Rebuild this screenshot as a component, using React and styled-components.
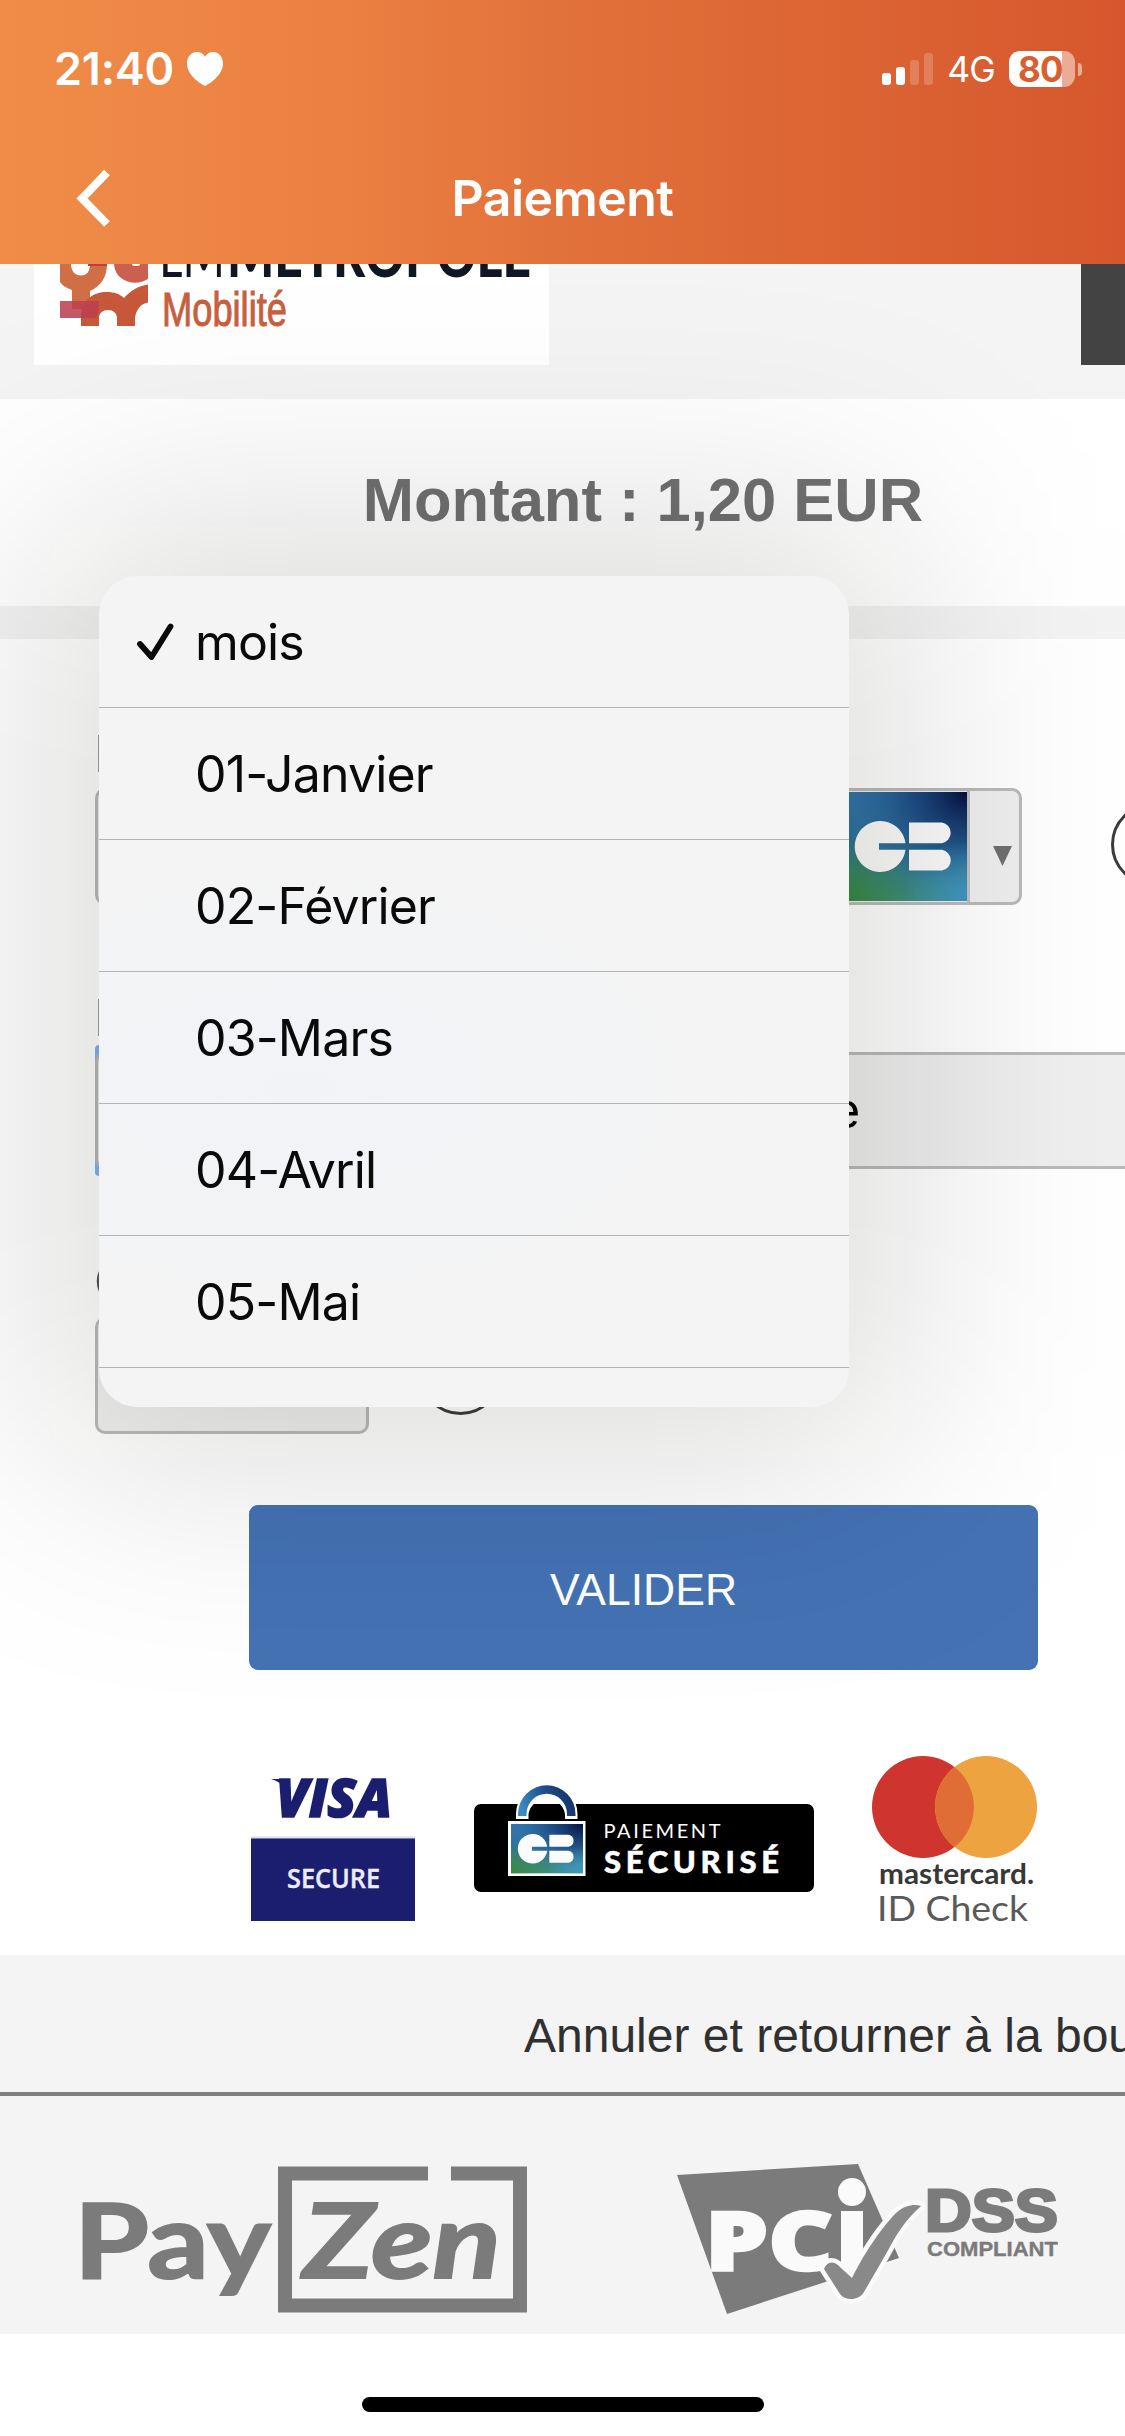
import React from 'react';
import styled, { createGlobalStyle } from 'styled-components';

const GlobalStyle = createGlobalStyle`
  *, *::before, *::after { box-sizing: border-box; }
  body { margin: 0; background: #fff; }
`;

const system = `Inter, 'Liberation Sans', sans-serif`;
const helvetica = `'Liberation Sans', Arial, sans-serif`;

const Screen = styled.div`
  position: relative;
  width: 1125px;
  height: 2436px;
  overflow: hidden;
  display: flex;
  flex-direction: column;
  background: #fff;
  font-family: ${helvetica};
`;

const Header = styled.header`
  flex: none;
  height: 264px;
  display: flex;
  flex-direction: column;
  color: #fff;
  font-family: ${system};
  background: linear-gradient(90deg, #f08c48 0%, #eb8042 30%, #e1703a 52%, #dc6433 75%, #d6572d 100%);
`;

const StatusBar = styled.div`
  height: 138px;
  padding: 0 43px 0 54px;
  display: flex;
  align-items: center;
  justify-content: space-between;
`;

const StatusGroup = styled.div`
  display: flex;
  align-items: center;
  gap: ${(p) => p.$gap}px;
`;

const Clock = styled.span`
  font-size: 45px;
  font-weight: 600;
  line-height: 54px;
  letter-spacing: -0.2px;
`;

const Network = styled.span`
  font-size: 35.5px;
  font-weight: 400;
  line-height: 42px;
  padding-top: 2px;
  letter-spacing: -0.8px;
`;

const Bars = styled.div`
  display: flex;
  align-items: flex-end;
  gap: 5px;
  height: 32px;
`;

const Bar = styled.span`
  width: 9px;
  height: ${(p) => p.$h}px;
  border-radius: 3px;
  background: #fff;
  opacity: ${(p) => (p.$on ? 1 : 0.2)};
`;

const Battery = styled.div`
  display: flex;
  align-items: center;
  gap: 3px;
`;

const BatteryBody = styled.div`
  width: 66px;
  height: 36px;
  padding-left: 9px;
  border-radius: 11px;
  display: flex;
  align-items: center;
  background: linear-gradient(90deg, #fff 53px, #eaac94 53px);
  color: #d95f31;
  font-size: 35px;
  font-weight: 700;
  line-height: 36px;
  letter-spacing: -0.8px;
`;

const BatteryCap = styled.span`
  width: 4px;
  height: 13px;
  border-radius: 0 5px 5px 0;
  background: #eaac94;
`;

const NavBar = styled.div`
  height: 120px;
  padding: 0 75px;
  display: grid;
  grid-template-columns: 40px 1fr 40px;
  align-items: center;
`;

const Title = styled.h1`
  margin: 0;
  text-align: center;
  font-size: 50px;
  font-weight: 600;
  line-height: 60px;
  letter-spacing: -0.5px;
`;

const Merchant = styled.div`
  flex: none;
  height: 135px;
  padding-left: 34px;
  display: flex;
  align-items: flex-start;
  justify-content: space-between;
  background: #f4f4f4;
`;

const MerchantLogo = styled.div`
  width: 515px;
  height: 101px;
  background: #fff;
`;

const LanguageBlock = styled.div`
  width: 44px;
  height: 101px;
  background: #434343;
`;

const Amount = styled.div`
  flex: none;
  height: 240px;
  padding: 65px 0 0 161px;
  border-bottom: 33px solid #f3f3f3;
  text-align: center;
  color: #717171;
  font-size: 61.5px;
  font-weight: 700;
  line-height: 72px;
`;

const Form = styled.main`
  flex: none;
  height: 1316px;
  padding: 87px 0 0 94px;
  display: flex;
  flex-direction: column;
`;

const FieldGroup = styled.div`
  flex: none;
  height: ${(p) => p.$h || 264}px;
  display: flex;
  flex-direction: column;
`;

const Label = styled.label`
  font-size: 54px;
  line-height: 54px;
  padding-bottom: ${(p) => p.$gap || 8}px;
  color: #555;
  white-space: nowrap;
`;

const FieldRow = styled.div`
  display: flex;
  align-items: center;
  flex: none;
  gap: ${(p) => p.$gap || 0}px;
`;

const Control = styled.div`
  flex: none;
  width: ${(p) => p.$w}px;
  height: 117px;
  margin-left: 1px;
  border: 3px solid #bababa;
  border-radius: 10px;
  display: flex;
  align-items: center;
  justify-content: flex-end;
  overflow: hidden;
  background: #efefef;
`;

const Arrow = styled.div`
  width: 52px;
  height: 111px;
  border-left: 3px solid #c0c0c0;
  padding-left: 23px;
  display: flex;
  align-items: center;
`;

const ArrowGlyph = styled.svg`
  margin-top: 19px;
`;

const HelpCircle = styled.div`
  flex: none;
  width: 83px;
  height: 83px;
  margin-bottom: 4px;
  border: 3px solid #3c3c3c;
  border-radius: 50%;
`;

const MonthSelect = styled.div`
  flex: none;
  width: 350px;
  height: 131px;
  margin: -7px 0 -7px 1px;
  border-radius: 4px;
  padding: 7px 0;
  background: #84b0f0;
`;

const MonthInner = styled.div`
  height: 117px;
  border: 3px solid #b8b8b6;
  border-radius: 10px;
  background: #e8e8e8;
`;

const YearSelect = styled.div`
  flex: none;
  width: 520px;
  height: 117px;
  border: 3px solid #bababa;
  border-radius: 10px;
  background: #efefef;
  padding-left: 53px;
  font-size: 50px;
  line-height: 113px;
  color: #000;
`;

const Submit = styled.button`
  flex: none;
  width: 789px;
  height: 165px;
  margin: 0 0 0 155px;
  padding: 4px 0 0;
  border: 0;
  border-radius: 9px;
  background: #4472b4;
  color: #fff;
  font-family: ${helvetica};
  font-size: 44.5px;
`;

const Badges = styled.div`
  margin: 85px 0 0 157px;
  width: 786px;
  height: 166px;
  display: flex;
  justify-content: space-between;
`;

const Cancel = styled.a`
  flex: none;
  height: 141px;
  padding: 54px 0 0 524px;
  border-bottom: 4px solid #7f7f7f;
  background: #f4f4f4;
  color: #303030;
  font-size: 48px;
  line-height: 54px;
  white-space: nowrap;
`;

const Footer = styled.footer`
  flex: none;
  height: 238px;
  padding: 68px 67px 0 81px;
  display: flex;
  align-items: flex-start;
  justify-content: space-between;
  background: #f4f4f4;
`;

const HomeArea = styled.div`
  flex: 1;
  display: flex;
  justify-content: center;
  padding-top: 63px;
`;

const HomeBar = styled.div`
  width: 402px;
  height: 15px;
  border-radius: 8px;
  background: #000;
`;

const Popover = styled.div`
  position: absolute;
  left: 99px;
  top: 576px;
  width: 750px;
  height: 831px;
`;

const PopoverShadow = styled.div`
  position: absolute;
  inset: -50px;
  border-radius: 38px;
  background: rgba(6, 6, 0, 0.145);
  filter: blur(120px);
`;

const Menu = styled.ul`
  position: relative;
  width: 750px;
  height: 831px;
  margin: 0;
  padding: 0;
  list-style: none;
  overflow: hidden;
  border-radius: 38px;
  background: radial-gradient(ellipse 480px 260px at 200px 510px, #f1f3f7 0%, #f4f4f4 100%);
  font-family: ${system};
`;

const MenuItem = styled.li`
  height: 132px;
  padding-left: 38px;
  border-bottom: 1px solid #b3b4b5;
  display: flex;
  align-items: center;
  color: #0a0a0a;
  font-size: 50px;
  letter-spacing: -0.85px;
`;

const CheckSlot = styled.span`
  width: 58px;
  display: flex;
  align-items: center;
`;

function Heart() {
  return (
    <svg width="36" height="34" viewBox="0 0 36 34">
      <path fill="#fff" d="M18 34C15 32.500 0 24 0 11.500C0 4.500 4.500 0 10 0C13.500 0 16.500 1.800 18 4.800C19.500 1.800 22.500 0 26 0C31.500 0 36 4.500 36 11.500C36 24 21 32.500 18 34Z" />
    </svg>
  );
}

function BackIcon() {
  return (
    <svg width="36" height="58" viewBox="0 0 36 58">
      <path d="M32 3.500L7 29.500L32 55" fill="none" stroke="#fff" strokeWidth="8" />
    </svg>
  );
}

function CheckIcon() {
  return (
    <svg width="38" height="38" viewBox="0 0 38 38">
      <path d="M3 21L14.500 34L33.500 3.500" fill="none" stroke="#0a0a0a" strokeWidth="5.800" strokeLinecap="round" strokeLinejoin="round" />
    </svg>
  );
}

function MetropoleMark() {
  return (
    <svg width="515" height="101" viewBox="34 264 515 101">
      <path fill="#d06e45" fillRule="evenodd" d="M60 264H107C107 277 101 286 90 291V309H72V290C66 288 62 285 60 282ZM71 264C71 271 75 275.500 81 275.500S90 271 90 264Z" />
      <rect x="88" y="264" width="19" height="2" fill="#c23d3d" />
      <path fill="#cb6050" d="M114 264H148V279C136 287 115 282 114 264Z" />
      <ellipse cx="136" cy="264" rx="4" ry="2" fill="#fff" />
      <path fill="#c8583a" d="M81 326V315C82 300 93 292 107 292C114 292 120 294 124 298C130 291 138 286 148 284.500V302.500C140 304 135 311 135 320V326H117V318C117 313 113 310 108 310S99 313 99 318V326Z" />
      <path fill="#bd4050" fillOpacity="0.87" d="M60 301H99V310L96 318H60Z" />
      <g fill="#111722" fontFamily="Lato, sans-serif" fontSize="62">
        <text x="159" y="277" fontWeight="400" textLength="66" lengthAdjust="spacingAndGlyphs">LM</text>
        <text x="227" y="277" fontWeight="900" textLength="304" lengthAdjust="spacingAndGlyphs">MÉTROPOLE</text>
      </g>
      <text x="162" y="326" fill="#c8603f" stroke="#c8603f" strokeWidth="1" fontFamily="'Liberation Sans', sans-serif" fontSize="49" textLength="125" lengthAdjust="spacingAndGlyphs">Mobilité</text>
    </svg>
  );
}

function CbArt({ id, width, height, viewHeight }) {
  const c = viewHeight / 2;
  return (
    <svg width={width} height={height} viewBox={`0 0 124 ${viewHeight}`} preserveAspectRatio="none">
      <defs>
        <linearGradient id={`${id}-base`} x1="0" y1="0" x2="0" y2="1">
          <stop offset="0" stopColor="#3174ae" />
          <stop offset="0.5" stopColor="#2f7399" />
          <stop offset="1" stopColor="#409080" />
        </linearGradient>
        <radialGradient id={`${id}-dark`} cx="1" cy="0" r="0.9">
          <stop offset="0" stopColor="#03103c" />
          <stop offset="0.5" stopColor="#183f78" stopOpacity="0.7" />
          <stop offset="1" stopColor="#22598f" stopOpacity="0" />
        </radialGradient>
        <radialGradient id={`${id}-green`} cx="0" cy="1" r="0.6">
          <stop offset="0" stopColor="#388a3e" />
          <stop offset="1" stopColor="#388a3e" stopOpacity="0" />
        </radialGradient>
        <radialGradient id={`${id}-sky`} cx="1" cy="0.95" r="0.5">
          <stop offset="0" stopColor="#4096c6" />
          <stop offset="1" stopColor="#4096c6" stopOpacity="0" />
        </radialGradient>
      </defs>
      {['base', 'dark', 'green', 'sky'].map((k) => (
        <rect key={k} width="124" height={viewHeight} fill={`url(#${id}-${k})`} />
      ))}
      <g fill="#fbfbfb">
        <path d={`M62.500 ${c - 3.300}A25.500 25.500 0 1 0 62.500 ${c + 3.300}H36V${c - 3.300}Z`} />
        <path d={`M66 ${c - 24}H99A10.500 10.500 0 0 1 99 ${c - 3.300}H66Z`} />
        <path d={`M66 ${c + 3.300}H99A10.500 10.500 0 0 1 99 ${c + 24}H66Z`} />
      </g>
    </svg>
  );
}

function VisaSecure() {
  return (
    <svg width="164" height="166" viewBox="251 1755 164 166">
      <text x="276" y="1816.500" fill="#1b1e6f" stroke="#1b1e6f" strokeWidth="1.600" fontFamily="'Open Sans', sans-serif" fontWeight="800" fontStyle="italic" fontSize="52.500" textLength="116" lengthAdjust="spacingAndGlyphs">VISA</text>
      <path d="M271 1779H287L286 1789C281 1783 277 1781 271 1779Z" fill="#1b1e6f" />
      <rect x="251" y="1836.500" width="164" height="3" fill="#dcdcea" />
      <rect x="251" y="1838.500" width="164" height="82.500" fill="#1b1e6f" />
      <text x="287" y="1887.500" fill="#ececf6" stroke="#ececf6" strokeWidth="0.400" fontFamily="'Open Sans', sans-serif" fontWeight="600" fontSize="26.500" textLength="93" lengthAdjust="spacingAndGlyphs">SECURE</text>
    </svg>
  );
}

function CbSecure() {
  return (
    <svg width="340" height="166" viewBox="474 1755 340 166">
      <defs>
        <linearGradient id="arch" x1="0" x2="1" y1="0.5" y2="0.3">
          <stop offset="0" stopColor="#3a8cc0" />
          <stop offset="0.5" stopColor="#1f4e8c" />
          <stop offset="1" stopColor="#14305f" />
        </linearGradient>
      </defs>
      <rect x="474" y="1804" width="340" height="88" rx="7" fill="#000" />
      <path d="M516 1819V1814A30.500 30.500 0 0 1 577.500 1814V1819H565V1814A18.500 18.500 0 0 0 528.500 1814V1819Z" fill="#fff" />
      <path d="M531 1804A18.500 18.500 0 0 1 562.500 1804Z" fill="#fff" />
      <path d="M518 1816V1814A28.700 28.700 0 0 1 575.500 1814V1816H567V1814A20.200 20.200 0 0 0 526.500 1814V1816Z" fill="url(#arch)" />
      <rect x="508" y="1821" width="77.500" height="55" fill="#fff" />
      <g transform="translate(511 1824)">
        <CbArt id="cb-lock" width={72} height={49.500} viewHeight={85} />
      </g>
      <text x="603.500" y="1837.500" fill="#fff" fontFamily="Lato, sans-serif" fontSize="20" textLength="117" lengthAdjust="spacing">PAIEMENT</text>
      <text x="604" y="1872.500" fill="#fff" stroke="#fff" strokeWidth="0.500" fontFamily="Lato, sans-serif" fontWeight="900" fontSize="31" textLength="175" lengthAdjust="spacing">SÉCURISÉ</text>
    </svg>
  );
}

function Mastercard() {
  return (
    <svg width="165" height="166" viewBox="872 1755 165 166">
      <circle cx="923" cy="1807" r="51" fill="#cf342f" />
      <circle cx="986" cy="1807" r="51" fill="#eca340" />
      <path d="M954.500 1767A51 51 0 0 1 954.500 1847A51 51 0 0 1 954.500 1767Z" fill="#e06c36" />
      <text x="879" y="1883.500" fill="#383838" fontFamily="Lato, sans-serif" fontWeight="700" fontSize="28" textLength="155" lengthAdjust="spacingAndGlyphs">mastercard.</text>
      <text x="877" y="1920.500" fill="#5a5a5a" fontFamily="Lato, sans-serif" fontWeight="400" fontSize="35" textLength="151" lengthAdjust="spacingAndGlyphs">ID Check</text>
    </svg>
  );
}

function PayZen() {
  return (
    <svg width="446" height="151" viewBox="81 2164 446 151">
      <path d="M428 2173.500H285V2305.500H520V2173.500H451" fill="none" stroke="#7b7b7b" strokeWidth="14" />
      <g fill="#7b7b7b" stroke="#7b7b7b" strokeWidth="2" fontFamily="Lato, sans-serif" fontWeight="700" fontSize="104">
        <text x="74" y="2277.500" textLength="197" lengthAdjust="spacingAndGlyphs">Pay</text>
        <text x="303" y="2277.500" fontStyle="italic" textLength="198" lengthAdjust="spacingAndGlyphs">Zen</text>
      </g>
    </svg>
  );
}

function PciDss() {
  return (
    <svg width="381" height="151" viewBox="677 2164 381 151">
      <path d="M677 2175L858 2164L899 2258L727 2314Z" fill="#7b7b7b" />
      <g fill="#fafafa" fontFamily="'Open Sans', sans-serif" fontWeight="800">
        <text x="705" y="2269.500" fontSize="82" stroke="#fafafa" strokeWidth="2.500" textLength="128" lengthAdjust="spacingAndGlyphs">PC</text>
        <circle cx="852" cy="2192" r="14" />
        <rect x="841" y="2211" width="22" height="60" />
      </g>
      <path
        d="M824 2269C827 2261 834 2260 841 2268L852 2278C866 2250 883 2226 896 2213C905 2205 915 2204 921 2206C904 2221 895 2237 886 2254L864 2292C859 2301 845 2301 840 2294Z"
        fill="#898989"
        stroke="#fafafa"
        strokeWidth="9"
        strokeLinejoin="round"
        paintOrder="stroke"
      />
      <g fill="#7b7b7b" stroke="#7b7b7b" fontFamily="'Liberation Sans', sans-serif" fontWeight="700">
        <text x="925" y="2231" fontSize="60" strokeWidth="3" textLength="133" lengthAdjust="spacingAndGlyphs">DSS</text>
        <text x="927" y="2256" fontSize="21" strokeWidth="0.400" textLength="131" lengthAdjust="spacingAndGlyphs">COMPLIANT</text>
      </g>
    </svg>
  );
}

const months = ['mois', '01-Janvier', '02-Février', '03-Mars', '04-Avril', '05-Mai'];

export default function App() {
  return (
    <Screen>
      <GlobalStyle />
      <Header>
        <StatusBar>
          <StatusGroup $gap={13}>
            <Clock>21:40</Clock>
            <Heart />
          </StatusGroup>
          <StatusGroup $gap={14}>
            <Bars>
              <Bar $h={12} $on />
              <Bar $h={18} $on />
              <Bar $h={25} />
              <Bar $h={32} />
            </Bars>
            <Network>4G</Network>
            <Battery>
              <BatteryBody>80</BatteryBody>
              <BatteryCap />
            </Battery>
          </StatusGroup>
        </StatusBar>
        <NavBar>
          <BackIcon />
          <Title>Paiement</Title>
        </NavBar>
      </Header>

      <Merchant>
        <MerchantLogo>
          <MetropoleMark />
        </MerchantLogo>
        <LanguageBlock />
      </Merchant>

      <Amount>Montant : 1,20 EUR</Amount>

      <Form>
        <FieldGroup>
          <Label>N°</Label>
          <FieldRow $gap={89}>
            <Control $w={927}>
              <CbArt id="cb-card" width={124} height={109} viewHeight={109} />
              <Arrow>
                <ArrowGlyph width="19" height="20" viewBox="0 0 19 20">
                  <path d="M0 0H19L9.500 20Z" fill="#707070" />
                </ArrowGlyph>
              </Arrow>
            </Control>
            <HelpCircle />
          </FieldRow>
        </FieldGroup>

        <FieldGroup>
          <Label>E</Label>
          <FieldRow $gap={220}>
            <MonthSelect>
              <MonthInner />
            </MonthSelect>
            <YearSelect>année</YearSelect>
          </FieldRow>
        </FieldGroup>

        <FieldGroup $h={251}>
          <Label $gap={9}>C</Label>
          <FieldRow $gap={50}>
            <Control $w={274} />
            <HelpCircle />
          </FieldRow>
        </FieldGroup>

        <Submit>VALIDER</Submit>

        <Badges>
          <VisaSecure />
          <CbSecure />
          <Mastercard />
        </Badges>
      </Form>

      <Cancel>Annuler et retourner à la boutique</Cancel>

      <Footer>
        <PayZen />
        <PciDss />
      </Footer>

      <HomeArea>
        <HomeBar />
      </HomeArea>

      <Popover>
        <PopoverShadow />
        <Menu>
          {months.map((m, i) => (
            <MenuItem key={m}>
              <CheckSlot>{i === 0 && <CheckIcon />}</CheckSlot>
              {m}
            </MenuItem>
          ))}
        </Menu>
      </Popover>
    </Screen>
  );
}
